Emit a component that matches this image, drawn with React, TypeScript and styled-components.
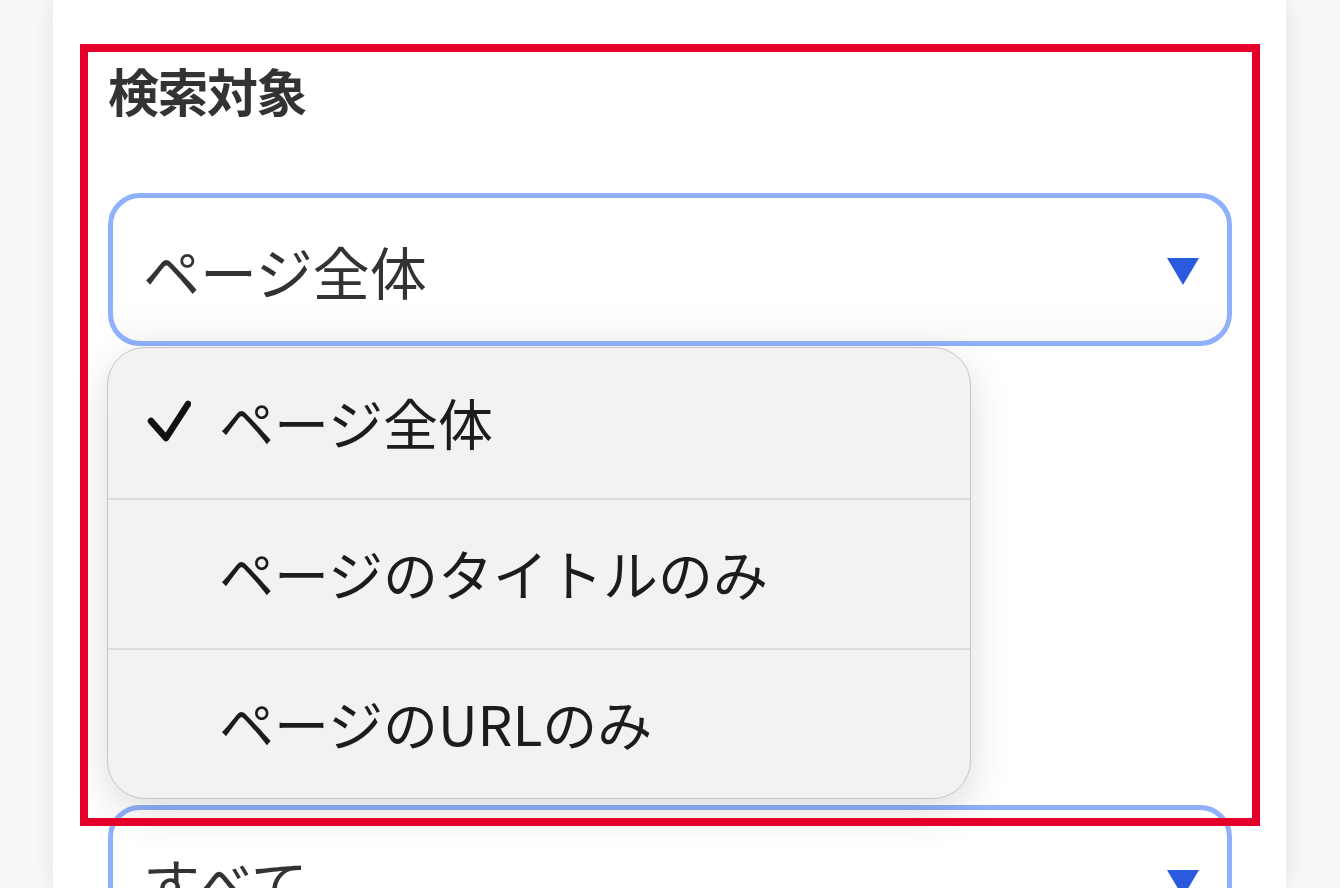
import styled, { createGlobalStyle } from 'styled-components';

const GlobalStyle = createGlobalStyle`
  html, body {
    margin: 0;
    padding: 0;
    background: #f8f8f8;
    font-family: "Noto Sans CJK JP", "Noto Sans", sans-serif;
  }
`;

const Page = styled.div`
  width: 1340px;
  height: 888px;
  overflow: hidden;
  padding: 0 54px 0 53px;
  box-sizing: border-box;
`;

const Panel = styled.div`
  position: relative;
  background: #fff;
  height: 100%;
  padding: 65px 54px 0 55px;
  box-sizing: border-box;
  box-shadow: 0 0 22px rgba(0, 0, 0, 0.09);
`;

const Label = styled.div`
  font-size: 51px;
  line-height: 1;
  font-weight: 700;
  color: #333;
  letter-spacing: -1.5px;
`;

const Select = styled.div<{ gap: number }>`
  margin-top: ${p => p.gap}px;
  height: 153px;
  box-sizing: border-box;
  border: 5px solid #8fb0fb;
  border-radius: 32px;
  background: linear-gradient(#fff 70%, #f9f9f9);
  display: flex;
  align-items: center;
  justify-content: space-between;
  padding: 0 28px 0 30px;
  font-size: 57px;
  color: #333;
`;

const Arrow = styled.span`
  width: 0;
  height: 0;
  border-left: 16px solid transparent;
  border-right: 16px solid transparent;
  border-top: 27px solid #2a5bde;
  margin-top: 4px;
`;

const Menu = styled.div`
  position: absolute;
  left: 54px;
  top: 347px;
  width: 864px;
  box-sizing: border-box;
  background: #f2f2f2;
  border: 1px solid #c6c6c6;
  border-radius: 38px;
  box-shadow: 0 12px 40px rgba(0, 0, 0, 0.14);
  overflow: hidden;
`;

const Item = styled.div`
  height: 150px;
  display: flex;
  align-items: center;
  font-size: 55px;
  color: #1c1c1c;
  padding-bottom: 4px;
  box-sizing: border-box;
  & + & {
    border-top: 2px solid #dcdcdc;
  }
`;

const CheckSlot = styled.span`
  width: 111px;
  height: 100%;
  display: flex;
  align-items: center;
  padding-left: 39px;
  box-sizing: border-box;
`;

const Highlight = styled.div`
  position: absolute;
  left: 27px;
  top: 44px;
  width: 1180px;
  height: 782px;
  box-sizing: border-box;
  border: 8px solid #e4002b;
  pointer-events: none;
`;

const Check = () => (
  <svg width="44" height="42" viewBox="0 0 44 42">
    <path d="M4 21 L19 38 L41 4" fill="none" stroke="#111" strokeWidth="6.5" strokeLinecap="round" strokeLinejoin="round" />
  </svg>
);

const options = ['ページ全体', 'ページのタイトルのみ', 'ページのURLのみ'];

function App() {
  const selected = options[0];
  return (
    <>
      <GlobalStyle />
      <Page>
        <Panel>
          <Label>検索対象</Label>
          <Select gap={77}>
            <span>{selected}</span>
            <Arrow />
          </Select>
          <Select gap={459}>
            <span>すべて</span>
            <Arrow />
          </Select>
          <Menu>
            {options.map(opt => (
              <Item key={opt}>
                <CheckSlot>{opt === selected && <Check />}</CheckSlot>
                {opt}
              </Item>
            ))}
          </Menu>
          <Highlight />
        </Panel>
      </Page>
    </>
  );
}

export default App;
